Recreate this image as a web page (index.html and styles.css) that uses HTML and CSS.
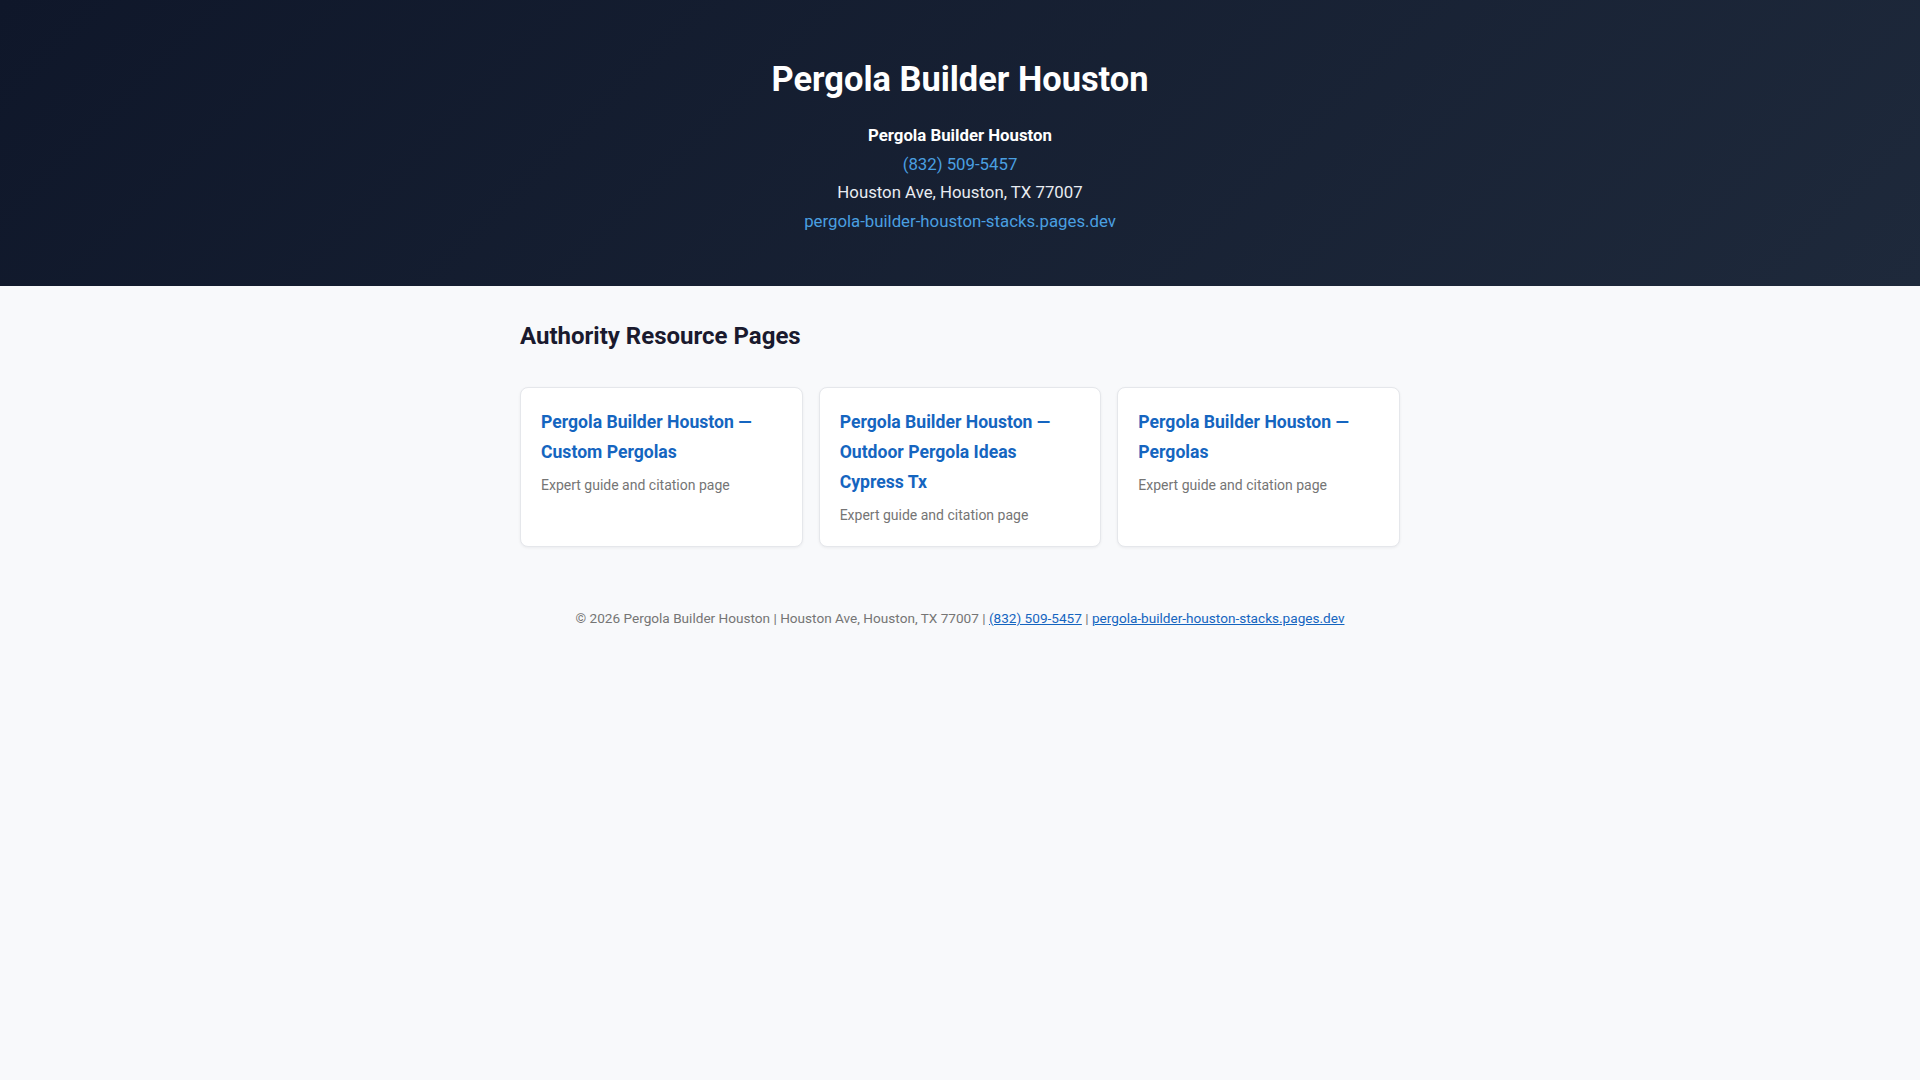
FILE: index.html
```html
<!DOCTYPE html>
<html lang="en">
<head>
    <meta charset="UTF-8">
    <meta name="viewport" content="width=device-width, initial-scale=1.0">
    <title>Pergola Builder Houston</title>
    <link rel="stylesheet" href="styles.css">
</head>
<body>
    <header class="hero">
        <h1>Pergola Builder Houston</h1>
        <div class="nap">
            <p class="nap-name">Pergola Builder Houston</p>
            <p><a href="tel:+18325095457">(832) 509-5457</a></p>
            <p>Houston Ave, Houston, TX 77007</p>
            <p><a href="https://pergola-builder-houston-stacks.pages.dev">pergola-builder-houston-stacks.pages.dev</a></p>
        </div>
    </header>
    <main class="container">
        <h2>Authority Resource Pages</h2>
        <div class="cards">
            <a class="card" href="#">
                <h3>Pergola Builder Houston — Custom Pergolas</h3>
                <p>Expert guide and citation page</p>
            </a>
            <a class="card" href="#">
                <h3>Pergola Builder Houston — Outdoor Pergola Ideas Cypress Tx</h3>
                <p>Expert guide and citation page</p>
            </a>
            <a class="card" href="#">
                <h3>Pergola Builder Houston — Pergolas</h3>
                <p>Expert guide and citation page</p>
            </a>
        </div>
    </main>
    <footer class="site-footer">
        <p>&copy; 2026 Pergola Builder Houston | Houston Ave, Houston, TX 77007 | <a href="tel:+18325095457">(832) 509-5457</a> | <a href="https://pergola-builder-houston-stacks.pages.dev">pergola-builder-houston-stacks.pages.dev</a></p>
    </footer>
</body>
</html>
```

FILE: styles.css
```css
:root {
    --navy: #0f172a;
    --slate: #1e293b;
    --sky: #4a9fe0;
    --blue: #1565c0;
    --ink: #1a1a2e;
    --muted: #757575;
    --page: #f8f9fb;
}
* {
    margin: 0;
    padding: 0;
    box-sizing: border-box;
}

body {
    background-color: var(--page);
    color: var(--ink);
    font-family: Roboto, "Open Sans", sans-serif;
    line-height: 1.6;
}

.hero {
    height: 286px;
    padding-top: 59px;
    background: linear-gradient(135deg, var(--navy), var(--slate));
    color: #ffffff;
    text-align: center;
}
.hero h1 {
    font-size: 2.15rem;
    font-weight: 700;
    line-height: 1.2;
    margin-bottom: 21px;
}
.nap p {
    font-size: 1.05rem;
    line-height: 28.5px;
    color: #e8ecf1;
}
.nap .nap-name {
    font-weight: 700;
    color: #ffffff;
}
.nap a {
    color: var(--sky);
    text-decoration: none;
}

.container {
    max-width: 880px;
    margin: 0 auto;
    padding-top: 34px;
}
.container h2 {
    font-size: 24px;
    font-weight: 700;
    line-height: 1.4;
    margin-bottom: 33px;
}

.cards {
    display: grid;
    grid-template-columns: repeat(3, 1fr);
    gap: 16px;
}
.card {
    display: block;
    background: #ffffff;
    border: 1px solid #e5e7eb;
    border-radius: 8px;
    box-shadow: 0 1px 3px rgba(15, 23, 42, 0.06);
    padding: 19px 20px 20px;
    text-decoration: none;
}
.card h3 {
    font-size: 1.1rem;
    font-weight: 700;
    line-height: 30px;
    color: var(--blue);
}
.card p {
    margin-top: 7px;
    font-size: 14px;
    line-height: 22px;
    color: var(--muted);
}

.site-footer {
    text-align: center;
    padding: 61px 0 40px;
    font-size: 0.85rem;
    color: var(--muted);
}
.site-footer a {
    color: var(--blue);
}
```
